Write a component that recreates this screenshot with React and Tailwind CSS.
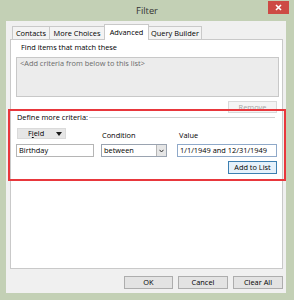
import React from 'react'

const font = { fontFamily: '"Open Sans", "Noto Sans", sans-serif' }

const Tab = ({ label, active, className }) => (
  <div
    className={
      active
        ? `h-[16px] bg-white border border-b-0 border-[#c9c9c9] flex items-center justify-center text-black ${className}`
        : `h-[13px] mb-px bg-[#f3f3f3] border border-b-0 border-[#c9c9c9] flex items-center justify-center text-black ${className}`
    }
  >
    {label}
  </div>
)

const Button = ({ children, className = '' }) => (
  <div
    className={`h-[13px] flex items-center justify-center border border-[#adadad] bg-[#e3e3e3] text-black ${className}`}
  >
    {children}
  </div>
)

const App = () => {
  return (
    <div className="relative w-[294px] h-[300px] bg-[#c3d0b5] flex flex-col text-[7.4px] leading-[9px] text-black" style={font}>
      {/* Title bar */}
      <div className="h-[21px] flex items-center justify-center">
        <span className="text-[9.3px] text-[#333]">Filter</span>
      </div>
      <div className="absolute top-[1px] right-[5px] w-[21px] h-[13px] bg-[#cd4a44] flex items-center justify-center">
        <svg width="7" height="7" viewBox="0 0 7 7">
          <path d="M1 1 L6 6 M6 1 L1 6" stroke="white" strokeWidth="1.6" />
        </svg>
      </div>

      {/* Client area */}
      <div className="ml-[6px] mr-[8px] h-[272px] bg-[#f0f0f0] flex flex-col pt-[3px] pb-[4px]">
        {/* Tabs */}
        <div className="relative z-10 h-[16px] -mb-px ml-[6px] flex items-end">
          <Tab label="Contacts" className="w-[38px]" />
          <Tab label="More Choices" className="w-[56px] -ml-px" />
          <Tab label="Advanced" active className="w-[45px] -ml-px" />
          <Tab label="Query Builder" className="w-[54px] -ml-px" />
        </div>

        {/* Panel */}
        <div className="ml-[4px] mr-[3px] h-[230px] bg-white border border-[#c9c9c9] flex flex-col pt-[3px]">
          <div className="ml-[10px]">Find items that match these</div>
          <div className="mt-[5px] ml-[5px] mr-[3px] h-[40px] bg-[#ececec] border border-[#c8c8c8] px-[3px] pt-[1px] text-[#6b6b6b]">
            &lt;Add criteria from below to this list&gt;
          </div>
          <div className="mt-[4px] self-end mr-[5px] w-[49px] h-[12px] flex items-center justify-center border border-[#d9d9d9] bg-[#f4f4f4] text-[#a3a3a3]">
            Remove
          </div>

          {/* Define more criteria */}
          <div className="ml-[6px] mr-[7px] flex items-center">
            <span>Define more criteria:</span>
            <div className="flex-1 ml-px h-px bg-[#d0d0d0]" />
          </div>

          <div className="mt-[6px] ml-[5px] mr-[5px] flex gap-[7px]">
            <div className="w-[78px] flex flex-col">
              <div className="ml-px w-[49px] h-[11px] bg-[#e6e6e6] border border-[#dadada] flex items-center">
                <span className="ml-[10px]">
                  F<span className="underline">i</span>eld
                </span>
                <svg className="ml-[12px]" width="6" height="4" viewBox="0 0 6 4">
                  <path d="M0 0 H6 L3 4 Z" fill="#1a1a1a" />
                </svg>
              </div>
              <div className="mt-[5px] h-[13px] bg-white border border-[#b5b5b5] flex items-center px-[2px]">
                Birthday
              </div>
            </div>

            <div className="w-[66px] flex flex-col">
              <div className="mt-[3px] ml-px">Condition</div>
              <div className="mt-[4px] h-[13px] bg-white border border-[#9aa3b0] flex items-center">
                <span className="flex-1 pl-[2px]">between</span>
                <div className="w-[10px] h-full bg-[#e6e6e6] border-l border-[#b5b5b5] flex items-center justify-center">
                  <svg width="5" height="4" viewBox="0 0 5 4">
                    <path d="M0.5 0.8 L2.5 3 L4.5 0.8" stroke="#333" strokeWidth="1" fill="none" />
                  </svg>
                </div>
              </div>
            </div>

            <div className="ml-[3px] flex-1 flex flex-col">
              <div className="mt-[3px] ml-[2px]">Value</div>
              <div className="mt-[4px] h-[13px] bg-white border border-[#8fa9c9] flex items-center px-[2px]">
                1/1/1949 and 12/31/1949
              </div>
              <div className="mt-[4px] self-end w-[49px] h-[13px] flex items-center justify-center border border-[#3c7fb1] bg-[#e5f1fb]">
                Add to List
              </div>
            </div>
          </div>
        </div>

        {/* Bottom buttons */}
        <div className="mt-[7px] mr-[3px] flex justify-end gap-[5px]">
          <Button className="w-[49px]">OK</Button>
          <Button className="w-[50px]">Cancel</Button>
          <Button className="w-[50px]">Clear All</Button>
        </div>
      </div>

      {/* Annotation highlight */}
      <div className="absolute left-[8px] top-[109px] w-[278px] h-[72px] border-2 border-[#e8373c] pointer-events-none" />
    </div>
  )
}

export default App
